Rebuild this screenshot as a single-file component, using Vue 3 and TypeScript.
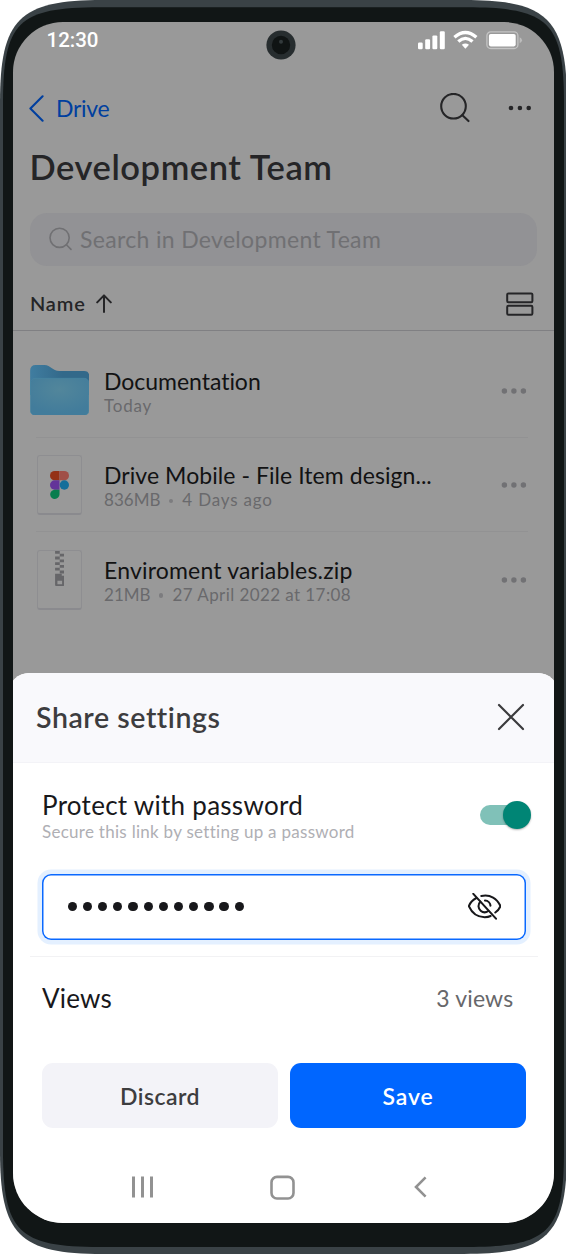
<script setup lang="ts">
interface DriveItem {
  kind: 'folder' | 'figma' | 'zip'
  name: string
  meta: string[]
  key: string
}

const items: DriveItem[] = [
  { key: 'docs', kind: 'folder', name: 'Documentation', meta: ['Today'] },
  { key: 'design', kind: 'figma', name: 'Drive Mobile - File Item design...', meta: ['836MB', '4 Days ago'] },
  { key: 'env', kind: 'zip', name: 'Enviroment variables.zip', meta: ['21MB', '27 April 2022 at 17:08'] },
]
const passwordLength = 12
</script>

<template>
  <div class="phone">
    <svg class="frame" viewBox="0 0 566 1254" aria-hidden="true">
      <path d="M103 0H464C548 0 567 19 567 103V1151C567 1235 548 1254 464 1254H103C19 1254 0 1235 0 1151V103C0 19 19 0 103 0Z" fill="#3a4246" />
      <path d="M100 7.3H467C549 7.3 564 22 564 104V1150C564 1232 549 1247 467 1247H100C18 1247 3 1232 3 1150V104C3 22 18 7.3 100 7.3Z" fill="#111616" />
    </svg>

    <main class="screen">
      <div class="status">
        <span class="time">12:30</span>
        <svg class="status-icons" viewBox="0 0 106 20" fill="#fff">
          <rect x="1" y="12.6" width="4.7" height="6.6" rx="1.2" />
          <rect x="8.2" y="9.3" width="4.9" height="9.9" rx="1.2" />
          <rect x="15.4" y="5.4" width="4.9" height="13.8" rx="1.2" />
          <rect x="22.8" y="1.2" width="5" height="18" rx="1.2" />
          <g fill="none" stroke="#fff" stroke-width="3.3">
            <path d="M37.4 7.2Q48.4-2.2 59.4 7.2" />
            <path d="M41.3 11.5Q48.4 5.2 55.5 11.5" />
          </g>
          <path d="M44.8 14.8Q48.4 12 52 14.8L48.4 18.8Z" />
          <rect x="69.9" y="1.9" width="31" height="16.6" rx="3.8" fill="none" stroke="#c4c4c4" stroke-width="1.3" />
          <rect x="71.9" y="4" width="26.8" height="12.4" rx="1.8" />
          <path d="M102.6 7.2Q105 8.2 105 10.2T102.6 13.2Z" fill="#bdbdbd" />
        </svg>
      </div>

      <nav class="nav">
        <a class="back">
          <svg viewBox="0 0 15 27" fill="none" stroke="#003f9f" stroke-width="2.1" stroke-linecap="round" stroke-linejoin="round"><path d="M13.6 1.3L1.4 13.5L13.6 25.7" /></svg>
          <span>Drive</span>
        </a>
        <div class="nav-actions">
          <svg class="lens" viewBox="0 0 30 30" fill="none" stroke="#252527" stroke-width="2.1" stroke-linecap="round"><circle cx="13.5" cy="13.2" r="12.3" /><path d="M22.4 22.2L28.5 28.1" /></svg>
          <svg class="more" viewBox="0 0 24 6" fill="#252527"><circle cx="3" cy="3" r="2.3" /><circle cx="11.9" cy="3" r="2.3" /><circle cx="20.7" cy="3" r="2.3" /></svg>
        </div>
      </nav>

      <h1 class="title">Development Team</h1>

      <div class="search">
        <svg viewBox="0 0 24 24" fill="none" stroke="#707073" stroke-width="1.6" stroke-linecap="round"><circle cx="10.6" cy="10.8" r="9.6" /><path d="M17.4 17.8L22 22.4" /></svg>
        <span>Search in Development Team</span>
      </div>

      <div class="sort">
        <span>Name</span>
        <svg class="arrow" viewBox="0 0 16 19" fill="none" stroke="#252527" stroke-width="2" stroke-linecap="round" stroke-linejoin="round"><path d="M8 18V1.5M1.2 8.4L8 1.4L14.8 8.4" /></svg>
        <svg class="layout" viewBox="0 0 28 24" fill="none" stroke="#252527" stroke-width="2"><rect x="1.2" y="1.4" width="25.2" height="8.8" rx="1.2" /><rect x="1.2" y="13.8" width="25.2" height="9" rx="1.2" /></svg>
      </div>

      <ul class="list">
        <li v-for="item in items" :key="item.key" class="row">
          <div class="thumb">
            <svg v-if="item.kind === 'folder'" class="folder" viewBox="0 0 177 152">
              <defs>
                <linearGradient id="folderBack" x1="0" x2="1"><stop offset="0" stop-color="#407da0" /><stop offset=".55" stop-color="#33698a" /></linearGradient>
                <radialGradient id="folderFront" cx=".5" cy=".3" r=".65"><stop offset="0" stop-color="#52869b" /><stop offset="1" stop-color="#427c9b" /></radialGradient>
              </defs>
              <path d="M0 17Q0 0 17 0H43C62 0 66 18 88 18H162Q177 18 177 33V90H0Z" fill="url(#folderBack)" />
              <rect x=".8" y="40" width="175.4" height="111" rx="14" fill="url(#folderFront)" stroke="#4886a3" stroke-width="2" />
            </svg>
            <div v-else class="page" :class="item.kind">
              <svg v-if="item.kind === 'figma'" viewBox="0 0 57 84">
                <path d="M14 0H28.5V28H14A14 14 0 0 1 14 0Z" fill="#943217" />
                <path d="M28.5 0H43A14 14 0 0 1 43 28H28.5Z" fill="#a04f48" />
                <path d="M14 28H28.5V56H14A14 14 0 0 1 14 28Z" fill="#633499" />
                <circle cx="43" cy="42" r="14" fill="#156e9a" />
                <path d="M14 56H28.5V70A14 14 0 1 1 14 56Z" fill="#087d4e" />
              </svg>
              <svg v-else viewBox="0 0 28 105" fill="#666669">
                <path d="M0 0H14V8.4H0ZM14 8.4H28V16.8H14ZM0 16.8H14V25.2H0ZM14 25.2H28V33.6H14ZM0 33.6H14V42H0ZM14 42H28V50.4H14ZM0 50.4H14V58.8H0ZM14 58.8H28V67.2H14Z" />
                <path fill-rule="evenodd" d="M0 68H20V74H28V102Q28 105 25 105H3Q0 105 0 102ZM7 89V100H21V89Z" />
              </svg>
            </div>
          </div>
          <div class="info">
            <div class="name" :class="item.key">{{ item.name }}</div>
            <div class="meta" :class="item.key">
              <template v-for="(part, i) in item.meta" :key="part">
                <i v-if="i > 0" class="sep"></i>
                <span>{{ part }}</span>
              </template>
            </div>
          </div>
          <svg class="row-more" viewBox="0 0 26 6" fill="#717174"><circle cx="3.4" cy="3" r="2.7" /><circle cx="12.9" cy="3" r="2.7" /><circle cx="22.4" cy="3" r="2.7" /></svg>
        </li>
      </ul>

      <section class="sheet">
        <header class="sheet-head">
          <h2>Share settings</h2>
          <svg viewBox="0 0 28 28" fill="none" stroke="#3b3b3d" stroke-width="2.2" stroke-linecap="round"><path d="M2 2L26 26M26 2L2 26" /></svg>
        </header>

        <div class="protect">
          <div>
            <div class="label">Protect with password</div>
            <div class="hint">Secure this link by setting up a password</div>
          </div>
          <span class="toggle"><span class="knob"></span></span>
        </div>

        <div class="field">
          <div class="bullets"><i v-for="n in passwordLength" :key="n"></i></div>
          <svg viewBox="0 0 100 80" fill="none" stroke="#18181b" stroke-width="6.2" stroke-linecap="round" stroke-linejoin="round">
            <path d="M16 2.5L84 77" />
            <path d="M25 15C14 21 6 30 2.5 39.5C12 61 30 72.5 50 72.5C57 72.5 63 71.5 68 69" />
            <path d="M40 9C67 3 88 17 97.5 39.5C94 48 89 54 82 58.5" />
            <path d="M37 26C29 34 30 46 38 53C45 59 54 59 61 54" />
            <path d="M51 22.5C60 23 67 30 67.5 38" />
          </svg>
        </div>

        <div class="views">
          <span class="label">Views</span>
          <span class="count">3 views</span>
        </div>

        <div class="actions">
          <button class="btn discard">Discard</button>
          <button class="btn save">Save</button>
        </div>

        <div class="system-nav">
          <svg class="recents" viewBox="0 0 22 22" fill="#929292"><rect x="0" y=".5" width="3" height="21" /><rect x="9" y=".5" width="3" height="21" /><rect x="18" y=".5" width="3" height="21" /></svg>
          <svg class="home" viewBox="0 0 25 25" fill="none" stroke="#929292" stroke-width="2.6"><rect x="1.5" y="1.9" width="22" height="21.6" rx="5.5" /></svg>
          <svg class="prev" viewBox="0 0 13 22" fill="none" stroke="#929292" stroke-width="2.6"><path d="M11.6 1.4L2 11L11.6 20.6" /></svg>
        </div>
      </section>
    </main>

    <svg class="camera" viewBox="0 0 30 30"><circle cx="15" cy="15" r="14.6" fill="#272d2f" /><circle cx="15" cy="15" r="9.2" fill="#101414" /><circle cx="15" cy="11.8" r="2" fill="#333a3c" /></svg>
  </div>
</template>

<style>
body { margin: 0; background: #fff; }
</style>

<style scoped>
* { box-sizing: border-box; }
.phone {
  position: relative;
  width: 566px;
  height: 1254px;
  padding: 22px 11.7px 30.7px 13px;
  overflow: hidden;
  font-family: Lato, "Liberation Sans", sans-serif;
}
svg { display: block; flex: none; }
.frame { position: absolute; left: 0; top: 0; width: 566px; height: 1254px; }
.camera { position: absolute; left: 265.7px; top: 30.3px; width: 30px; height: 30px; }
.screen {
  position: relative;
  height: 1201.3px;
  border-radius: 50px;
  overflow: hidden;
  background: #999;
}

.status { height: 36px; padding: 0 31px 0 33.5px; display: flex; align-items: center; justify-content: space-between; }
.time { font: 500 20.5px/24px Roboto, sans-serif; color: #fff; }
.status-icons { width: 106px; height: 20px; }

.nav { height: 50px; margin-top: 25px; padding: 0 22px 0 16px; display: flex; align-items: center; justify-content: space-between; }
.back { display: flex; align-items: center; gap: 12px; color: #003f9f; font-size: 23px; line-height: 28px; letter-spacing: -.3px; }
.back svg { width: 15px; height: 27px; }
.back span { margin-top: -1px; }
.nav-actions { display: flex; align-items: center; gap: 38.5px; }
.lens { width: 30px; height: 30px; }
.more { width: 24px; height: 6px; }

.title { margin: 14px 0 0 16.5px; font-size: 34.5px; line-height: 40px; font-weight: 600; letter-spacing: .55px; color: #252527; white-space: nowrap; }

.search { height: 52.5px; margin: 26px 17.5px 0 17px; padding-left: 19px; display: flex; align-items: center; gap: 7px; border-radius: 17px; background: #929295; color: #707073; font-size: 23px; letter-spacing: .33px; white-space: nowrap; }
.search svg { width: 24px; height: 24px; }

.sort { height: 65.2px; padding: 12px 20px 0 17px; display: flex; align-items: center; border-bottom: 1px solid #808083; color: #252527; font-size: 20px; font-weight: 600; letter-spacing: .8px; }
.sort span { margin-top: -1px; }
.arrow { width: 16px; height: 19px; margin-left: 10px; }
.layout { width: 28px; height: 24px; margin-left: auto; }

.list { list-style: none; margin: 12.6px 0 0; padding: 0; }
.row { position: relative; height: 94.5px; padding: 0 27px 0 17px; display: flex; align-items: center; }
.row:not(:last-child)::after { content: ""; position: absolute; left: 23px; right: 26px; bottom: 0; height: 1px; background: #929293; }
.thumb { width: 59px; display: flex; justify-content: center; }
.folder { width: 59.3px; height: 50.7px; margin-top: -1px; }
.page { width: 45px; height: 60px; border: 1px solid #8e8e91; border-bottom: 2px solid #8a8a8e; border-radius: 3px; display: flex; justify-content: center; }
.page.figma { align-items: center; }
.page.figma svg { width: 19px; height: 28px; }
.page.zip svg { width: 9.5px; height: 35px; }
.info { flex: 1; margin-left: 15px; padding-top: 3px; white-space: nowrap; }
.name { font-size: 23px; line-height: 26px; color: #121213; }
.name.docs { letter-spacing: -.03px; }
.name.design { letter-spacing: .06px; }
.name.env { letter-spacing: .18px; }
.meta { display: flex; align-items: center; height: 23px; font-size: 17px; line-height: 23px; color: #69696c; }
.meta.design { letter-spacing: .8px; }
.meta.env { letter-spacing: .42px; }
.meta span:first-of-type { letter-spacing: .02px; }
.meta.docs span { letter-spacing: .8px; }
.sep { width: 4.4px; height: 4.4px; margin: 3px 9px 0 8.5px; border-radius: 50%; background: #7c7c7f; }
.row-more { width: 26px; height: 6px; }

.sheet { position: absolute; left: -4px; right: -4px; top: 651px; bottom: 0; border-radius: 20px 20px 0 0; overflow: hidden; background: #fff; }
.sheet-head { height: 90px; padding: 0 33px 1px 27px; display: flex; align-items: center; justify-content: space-between; background: #f9f9fc; border-bottom: 1px solid #f3f3f7; }
.sheet-head h2 { margin: 0; font-size: 28.5px; font-weight: 600; line-height: 34px; letter-spacing: .57px; color: #3d3d3f; }
.sheet-head svg { width: 28px; height: 28px; }

.protect { height: 111px; padding: 27.5px 27px 0 33px; display: flex; justify-content: space-between; align-items: flex-start; }
.label { font-size: 26px; line-height: 28px; letter-spacing: .27px; color: #18181b; }
.hint { font-size: 17px; line-height: 25px; letter-spacing: .28px; color: #afafb4; }
.toggle { width: 51.5px; height: 20px; margin-top: 14.5px; border-radius: 10px; display: flex; align-items: center; justify-content: flex-end; background: linear-gradient(90deg, #80c1b8 0 42px, transparent 42px); }
.knob { flex: none; width: 28.5px; height: 28.5px; border-radius: 50%; background: #008575; box-shadow: 0 1px 2px rgba(0, 0, 0, .3); }

.field { height: 65.5px; margin: 0 32.3px 0 33px; padding: 0 25px; display: flex; align-items: center; justify-content: space-between; border-radius: 9px; box-shadow: inset 0 0 0 1.5px #0a69ff, 0 0 0 4.5px #e4f0ff; }
.bullets { display: flex; gap: 5.9px; margin-left: .6px; }
.bullets i { width: 9.3px; height: 9.3px; border-radius: 50%; background: #18181b; }
.field svg { width: 33.3px; height: 26.7px; }

.views { height: 82px; margin: 16px 20px 0 21px; padding: 2px 25px 0 12px; display: flex; align-items: center; justify-content: space-between; border-top: 1px solid #f2f2f4; }
.views .label { letter-spacing: .2px; }
.count { font-size: 23px; letter-spacing: .15px; color: #67676a; }

.actions { display: grid; grid-template-columns: 1fr 1fr; gap: 12px; margin: 25.5px 32.3px 0 33px; }
.btn { height: 65.3px; padding: 0; border: 0; border-radius: 11px; font: 600 23px/28px Lato, sans-serif; letter-spacing: .45px; }
.discard { background: #f3f3f8; color: #3d3d3f; }
.save { background: #0066ff; color: #fff; letter-spacing: .9px; }

.system-nav { margin-top: 46.5px; padding: 0 131px 0 123px; display: flex; align-items: center; justify-content: space-between; }
.recents { width: 22px; height: 22px; }
.home { width: 25px; height: 25px; margin-right: 3px; }
.prev { width: 13px; height: 22px; }
</style>
